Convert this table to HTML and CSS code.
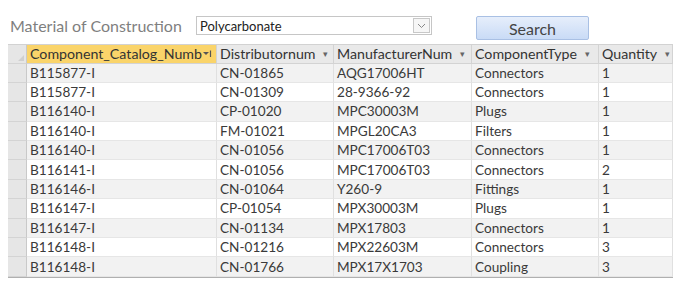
FILE: index.html
```html
<!DOCTYPE html>
<html lang="en">
<head>
    <meta charset="UTF-8">
    <title>Material of Construction</title>
    <link rel="stylesheet" href="styles.css">
</head>
<body>
    <div class="form-top">
        <span class="field-label">Material of Construction</span>
        <div class="combo">
            <span class="combo-value">Polycarbonate</span>
            <span class="combo-btn">
                <svg width="9" height="6" viewBox="0 0 9 6"><path d="M1 1 L4.5 4.5 L8 1" fill="none" stroke="#888" stroke-width="1"/></svg>
            </span>
        </div>
        <button class="search-btn">Search</button>
    </div>

    <div class="datasheet">
        <div class="row head">
            <div class="sel corner"><span class="corner-tri"></span></div>
            <div class="cell active">Component_Catalog_Numb<span class="filter-arrow"><svg width="10" height="8" viewBox="0 0 10 8"><path d="M0 2 L6 2 L3 5 Z" fill="#555"/><path d="M7.5 0.5 L7.5 7" stroke="#555" stroke-width="1.2"/></svg></span></div>
            <div class="cell">Distributornum<span class="arrow">&#9662;</span></div>
            <div class="cell">ManufacturerNum<span class="arrow">&#9662;</span></div>
            <div class="cell">ComponentType<span class="arrow">&#9662;</span></div>
            <div class="cell">Quantity<span class="arrow">&#9662;</span></div>
        </div>
        <div class="row"><div class="sel"></div><div class="cell">B115877-I</div><div class="cell">CN-01865</div><div class="cell">AQG17006HT</div><div class="cell">Connectors</div><div class="cell">1</div></div>
        <div class="row"><div class="sel"></div><div class="cell">B115877-I</div><div class="cell">CN-01309</div><div class="cell">28-9366-92</div><div class="cell">Connectors</div><div class="cell">1</div></div>
        <div class="row"><div class="sel"></div><div class="cell">B116140-I</div><div class="cell">CP-01020</div><div class="cell">MPC30003M</div><div class="cell">Plugs</div><div class="cell">1</div></div>
        <div class="row"><div class="sel"></div><div class="cell">B116140-I</div><div class="cell">FM-01021</div><div class="cell">MPGL20CA3</div><div class="cell">Filters</div><div class="cell">1</div></div>
        <div class="row"><div class="sel"></div><div class="cell">B116140-I</div><div class="cell">CN-01056</div><div class="cell">MPC17006T03</div><div class="cell">Connectors</div><div class="cell">1</div></div>
        <div class="row"><div class="sel"></div><div class="cell">B116141-I</div><div class="cell">CN-01056</div><div class="cell">MPC17006T03</div><div class="cell">Connectors</div><div class="cell">2</div></div>
        <div class="row"><div class="sel"></div><div class="cell">B116146-I</div><div class="cell">CN-01064</div><div class="cell">Y260-9</div><div class="cell">Fittings</div><div class="cell">1</div></div>
        <div class="row"><div class="sel"></div><div class="cell">B116147-I</div><div class="cell">CP-01054</div><div class="cell">MPX30003M</div><div class="cell">Plugs</div><div class="cell">1</div></div>
        <div class="row"><div class="sel"></div><div class="cell">B116147-I</div><div class="cell">CN-01134</div><div class="cell">MPX17803</div><div class="cell">Connectors</div><div class="cell">1</div></div>
        <div class="row"><div class="sel"></div><div class="cell">B116148-I</div><div class="cell">CN-01216</div><div class="cell">MPX22603M</div><div class="cell">Connectors</div><div class="cell">3</div></div>
        <div class="row"><div class="sel"></div><div class="cell">B116148-I</div><div class="cell">CN-01766</div><div class="cell">MPX17X1703</div><div class="cell">Coupling</div><div class="cell">3</div></div>
    </div>
</body>
</html>
```

FILE: styles.css
```css
/* Formulario estilo Access */
body {
    margin: 0;
    background: #ffffff;
    font-family: Lato, "Open Sans", sans-serif;
    color: #3a3a3a;
}

.form-top {
    display: flex;
    align-items: flex-start;
    height: 44px;
    box-sizing: border-box;
    padding: 14px 0 0 10px;
}

.field-label {
    font-size: 16px;
    line-height: 20px;
    margin-top: 2px;
    color: #7f7f7f;
    width: 186px;
}

.combo {
    display: flex;
    align-items: center;
    width: 236px;
    height: 19px;
    margin-top: 2px;
    border: 1px solid #c6c6c6;
    box-sizing: border-box;
}

.combo-value {
    flex: 1;
    font-size: 13px;
    padding-left: 3px;
    color: #222;
}

.combo-btn {
    width: 17px;
    height: 15px;
    margin-right: 1px;
    border: 1px solid #c8c8c8;
    box-sizing: border-box;
    display: flex;
    align-items: center;
    justify-content: center;
    background: #f6f6f6;
}

.search-btn {
    margin-left: 44px;
    margin-top: 2px;
    width: 113px;
    height: 24px;
    border: 1px solid #a9c0e4;
    border-radius: 2px;
    background: linear-gradient(#e6eefb, #c9dbf6);
    font-family: inherit;
    font-size: 16px;
    color: #444;
    padding: 0;
}

/* Hoja de datos */
.datasheet {
    margin-left: 8px;
    width: 665px;
    border-bottom: 1px solid #b0b0b0;
}

.row {
    display: grid;
    grid-template-columns: 19px 190px 117px 138px 127px 74px;
    height: 19.4px;
    font-size: 13.6px;
}

.row:nth-child(even) {
    background: #f2f2f2;
}

.row.head {
    background: #e9e9e9;
    border-top: 1px solid #d2d2d2;
    height: 18.5px;
}

.cell {
    display: flex;
    align-items: center;
    padding-left: 3px;
    border-right: 1px solid #e0e0e0;
    border-bottom: 1px solid #e6e6e6;
    box-sizing: border-box;
    white-space: nowrap;
    overflow: hidden;
}

.head .cell {
    border-right: 1px solid #d3d3d3;
    border-bottom: 1px solid #d3d3d3;
    font-size: 14.2px;
    color: #333;
}

.head .cell.active {
    background: #fad46a;
}

.arrow {
    font-size: 9px;
    color: #666;
    margin-left: 8px;
}

.filter-arrow {
    display: flex;
    margin-left: 1px;
}

.sel {
    background: #e6e6e6;
    border-right: 1px solid #c9c9c9;
    border-bottom: 1px solid #d4d4d4;
    box-sizing: border-box;
}

.sel.corner {
    position: relative;
}

.corner-tri {
    position: absolute;
    right: 2px;
    bottom: 2px;
    width: 0;
    height: 0;
    border-left: 6px solid transparent;
    border-bottom: 6px solid #cfcfcf;
}
```
